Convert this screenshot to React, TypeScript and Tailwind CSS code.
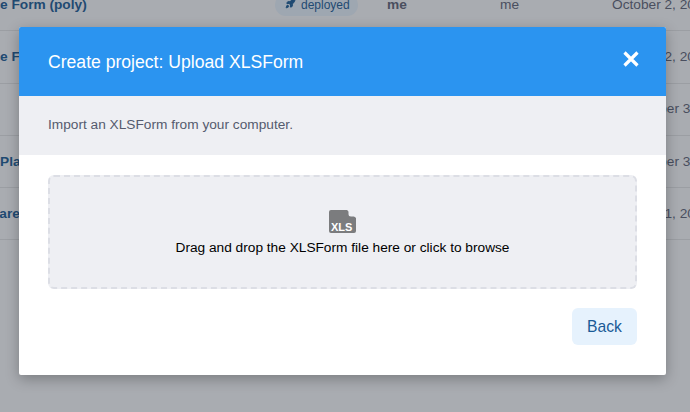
import React from "react";
import { Rocket } from "lucide-react";

const rows = [
  { name: "e Form (poly)", date: "October 2, 2019", deployed: true, nudge: "" },
  { name: "e F", date: "October 2, 2019", nudge: "" },
  { name: "", date: "September 30, 2019", nudge: "" },
  { name: "Pla", date: "September 30, 2019", nudge: "" },
  { name: "hare", date: "October 1, 2019", nudge: "-ml-[9px]" },
];

export default function App() {
  return (
    <div className="relative h-[412px] w-[690px] overflow-hidden bg-[#a9acb1] font-['Liberation_Sans',Arial,sans-serif]">
      {/* table behind the overlay */}
      <div className="-mt-[21px] flex flex-col">
        {rows.map((row, i) => (
          <div key={i} className="flex h-[52.3px] shrink-0 items-center border-b border-[#9b9ea3] pt-[1px] text-[13.7px] text-[#4a4f5f] whitespace-nowrap">
            <div className="w-[275px] shrink-0 text-[#1f4a72] font-bold">
              <div className={row.nudge}>{row.name}</div>
            </div>
            <div className="w-[112px] shrink-0">
              {row.deployed && (
                <span className="flex h-[22px] w-[83px] items-center gap-[5px] rounded-full bg-[#9ea7b1] pl-[10px] text-[12px] text-[#1f4a72]">
                  <Rocket size={11} fill="#1f4a72" className="-mt-[3px]" />
                  deployed
                </span>
              )}
            </div>
            <div className="w-[113px] shrink-0 font-bold">{row.deployed && "me"}</div>
            <div className="w-[112px] shrink-0">{row.deployed && "me"}</div>
            <div className="shrink-0">{row.date}</div>
          </div>
        ))}
      </div>

      {/* modal */}
      <div className="absolute top-[27px] left-[19px] w-[647px] h-[348px] overflow-hidden rounded-[2px] bg-white shadow-[0_4px_14px_rgba(0,0,0,0.28)]">
        <div className="flex h-[69px] items-center justify-between bg-[#2b94f0] pl-[29px] pr-[26px] text-white">
          <h1 className="pt-[2px] text-[17.6px]">Create project: Upload XLSForm</h1>
          <svg width="18" height="18" viewBox="0 0 18 18" className="mb-[6px]">
            <path d="M2.5 2.5 L15.5 15.5 M15.5 2.5 L2.5 15.5" stroke="#fff" strokeWidth="3.2" />
          </svg>
        </div>
        <div className="flex h-[59px] items-center bg-[#eeeff3] pl-[29px] text-[13.7px] text-[#555b6e]">
          Import an XLSForm from your computer.
        </div>
        <div className="px-[29px] pt-[20px]">
          <div className="flex h-[114px] flex-col items-center justify-center rounded-[6px] border-2 border-dashed border-[#dcdee5] bg-[#eeeff3] pt-[2px] text-[13.7px] leading-[16px] text-black">
            <svg width="27" height="23" viewBox="0 0 27 23" className="mb-[7px]">
              <path d="M2 0 H18 L27 8 V21 a2 2 0 0 1 -2 2 H2 a2 2 0 0 1 -2 -2 V2 a2 2 0 0 1 2 -2 Z" fill="#7b7c7e" />
              <path d="M19.5 0 L27 6.5 H22 a2.5 2.5 0 0 1 -2.5 -2.5 Z" fill="#eeeff3" />
              <text x="2" y="21" fontSize="11" fontWeight="700" fill="#fff">XLS</text>
            </svg>
            Drag and drop the XLSForm file here or click to browse
          </div>
          <div className="mt-[19px] flex justify-end">
            <button className="h-[37px] w-[65px] rounded-[6px] bg-[#e6f2fd] text-[15.7px] text-[#1a5a96]">Back</button>
          </div>
        </div>
      </div>
    </div>
  );
}
